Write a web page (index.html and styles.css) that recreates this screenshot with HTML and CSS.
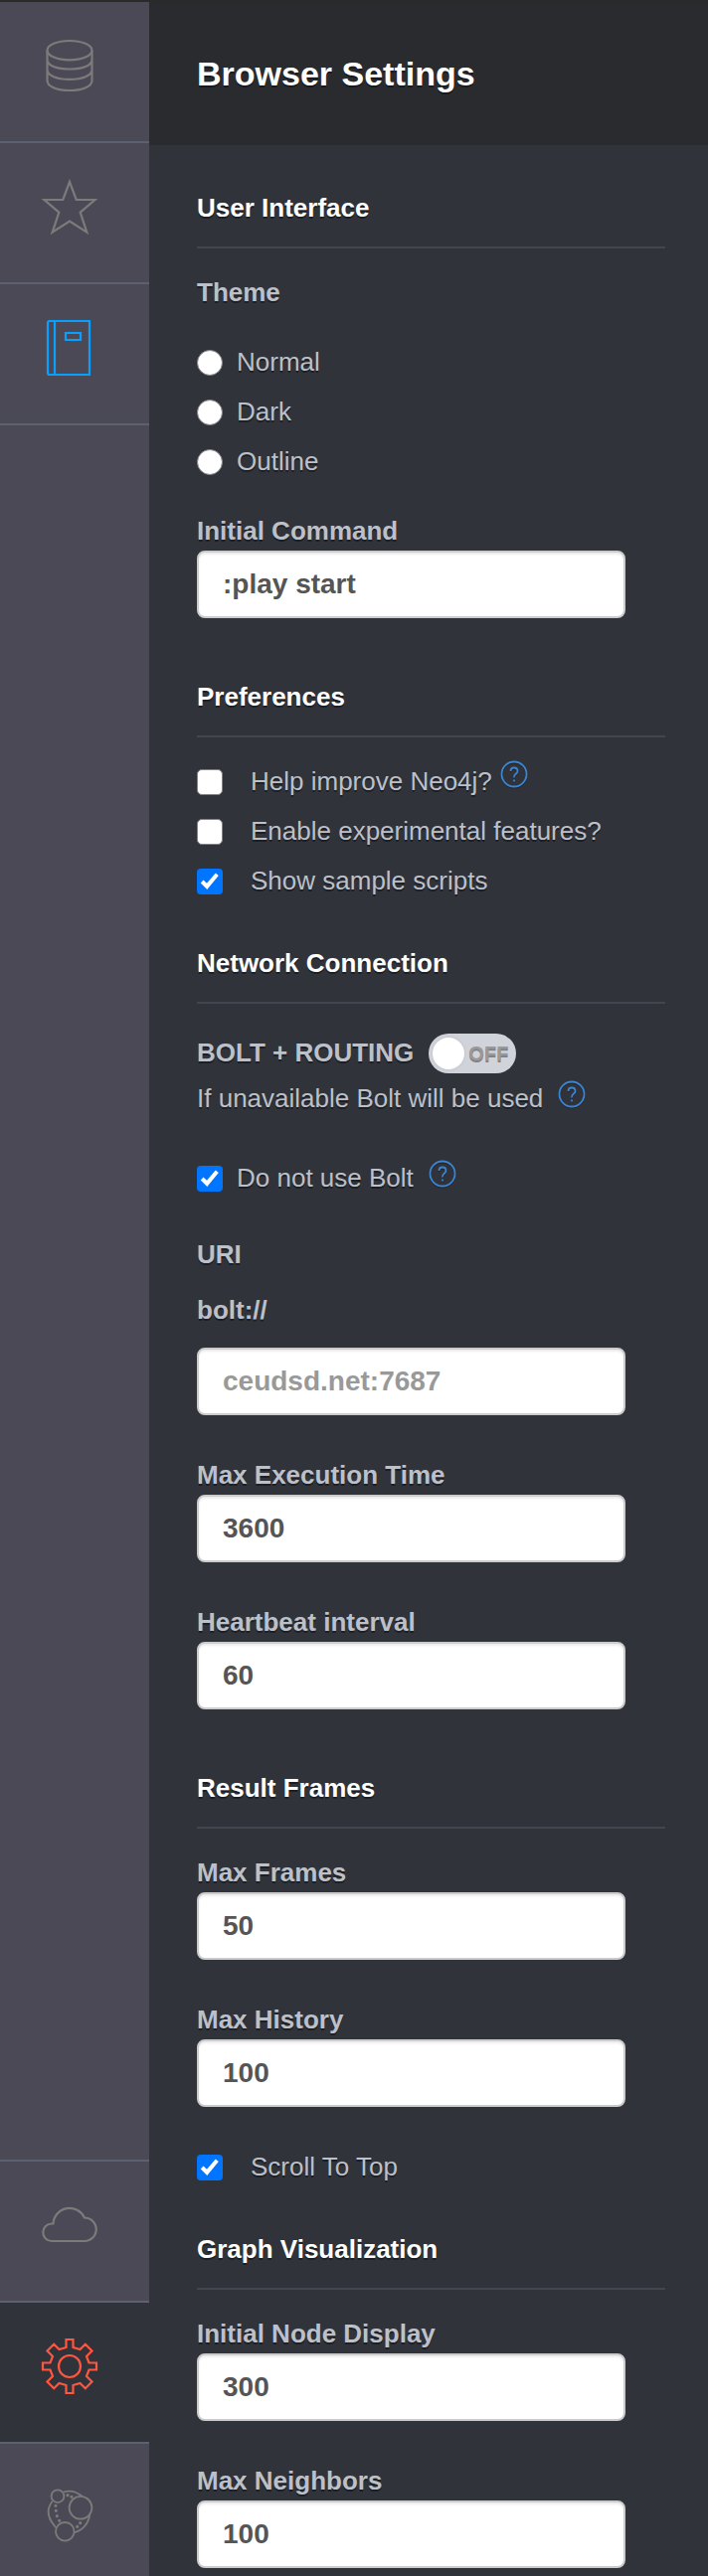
FILE: index.html
```html
<!DOCTYPE html>
<html lang="en">
<head>
<meta charset="utf-8">
<title>Browser Settings</title>
<link rel="stylesheet" href="styles.css">
</head>
<body>
<div class="app">
  <nav class="sidebar">
    <a class="nav-item"><svg class="icon" viewBox="0 0 60 60"><ellipse cx="30" cy="16.700" rx="22.500" ry="9.700"/><path d="M7.500 16.700V47C7.500 53 17 57 30 57S52.500 53 52.500 47V16.700M7.500 26C7.500 32 17 35.500 30 35.500S52.500 32 52.500 26M7.500 36C7.500 42 17 45.800 30 45.800S52.500 42 52.500 36"/></svg></a>
    <a class="nav-item"><svg class="icon" viewBox="0 0 60 60"><path d="M30 7L36.700 25H55.500L40.700 37.700L47.300 57.700L30 46.500L12.700 57.700L19.300 37.700L4.500 25H23.300Z"/></svg></a>
    <a class="nav-item blue"><svg class="icon" viewBox="0 0 60 60"><path d="M10 5H50V59H10Q8 59 8 57V7Q8 5 10 5ZM15 5V59M26 17H41V24H26Z"/></svg></a>
    <div class="spacer"></div>
    <a class="nav-item up"><svg class="icon" viewBox="0 0 60 60"><path d="M12 48H45A11.750 11.750 0 0 0 45 24.500A16.500 16.500 0 0 0 13.500 30.500H12A8.750 8.750 0 0 0 12 48Z"/></svg></a>
    <a class="nav-item up active"><svg class="icon" viewBox="0 0 60 60"><path d="M26.500 5H33.500V13L40.500 15L45.800 9.800L52.500 16.500L47 22L49.500 28.500H57V35.500H49.500L47 42L52.500 47.500L45.800 54.200L40.500 49L33.500 51V59H26.500V51L19.500 49L14.200 54.200L7.500 47.500L13 42L10.500 35.500H3V28.500H10.500L13 22L7.500 16.500L14.200 9.800L19.500 15L26.500 13Z"/><circle cx="30" cy="32" r="11"/></svg></a>
    <a class="nav-item up"><svg class="icon graph" viewBox="0 0 60 60"><circle cx="18" cy="20.700" r="6.400"/><circle cx="41" cy="32.300" r="11.400"/><circle cx="25.300" cy="56.300" r="9.300"/><path d="M24 16.500Q34 13.500 43 21M12.700 25.700Q3 38 16.500 52.500M50.300 39Q48 53.500 34.300 57.500"/><path class="dots" d="M28 19.700h0M32 21.300h0M16 30.300h0M16.300 35.300h0M17.300 40.700h0M19.700 45.300h0M40.700 47.700h0M37.700 51.300h0"/></svg></a>
  </nav>
  <main class="drawer">
    <header class="drawer-header"><h1>Browser Settings</h1></header>
    <div class="content">
      <h2>User Interface</h2>
      <div class="label theme">Theme</div>
      <label class="row"><input type="radio" name="theme"><span>Normal</span></label>
      <label class="row"><input type="radio" name="theme"><span>Dark</span></label>
      <label class="row"><input type="radio" name="theme"><span>Outline</span></label>
      <label class="field first"><span class="label">Initial Command</span><input class="text" value=":play start"></label>

      <h2 class="after-field">Preferences</h2>
      <label class="row wide"><input type="checkbox"><span>Help improve Neo4j?</span><svg class="help near" viewBox="0 0 28 28"><circle cx="14" cy="14" r="12.500"/><path d="M10.500 11Q10.500 7.500 14 7.500T17.500 11Q17.500 12.500 15.500 14T14 17.500M14 19.500V21.500"/></svg></label>
      <label class="row wide"><input type="checkbox"><span>Enable experimental features?</span></label>
      <label class="row wide"><input type="checkbox" checked><span>Show sample scripts</span></label>

      <h2 class="after-row">Network Connection</h2>
      <div class="switch-row"><span class="label">BOLT + ROUTING</span><span class="switch"><span class="knob"></span><span class="off">OFF</span></span></div>
      <div class="row note"><span>If unavailable Bolt will be used</span><svg class="help" viewBox="0 0 28 28"><circle cx="14" cy="14" r="12.500"/><path d="M10.500 11Q10.500 7.500 14 7.500T17.500 11Q17.500 12.500 15.500 14T14 17.500M14 19.500V21.500"/></svg></div>
      <label class="row bolt"><input type="checkbox" checked><span>Do not use Bolt</span><svg class="help" viewBox="0 0 28 28"><circle cx="14" cy="14" r="12.500"/><path d="M10.500 11Q10.500 7.500 14 7.500T17.500 11Q17.500 12.500 15.500 14T14 17.500M14 19.500V21.500"/></svg></label>
      <div class="label uri">URI</div>
      <label class="field scheme"><span class="label">bolt://</span><input class="text" placeholder="ceudsd.net:7687"></label>
      <label class="field"><span class="label">Max Execution Time</span><input class="text" value="3600"></label>
      <label class="field"><span class="label">Heartbeat interval</span><input class="text" value="60"></label>

      <h2 class="after-field">Result Frames</h2>
      <label class="field top"><span class="label">Max Frames</span><input class="text" value="50"></label>
      <label class="field"><span class="label">Max History</span><input class="text" value="100"></label>
      <label class="row wide scroll"><input type="checkbox" checked><span>Scroll To Top</span></label>

      <h2 class="after-row">Graph Visualization</h2>
      <label class="field top"><span class="label">Initial Node Display</span><input class="text" value="300"></label>
      <label class="field"><span class="label">Max Neighbors</span><input class="text" value="100"></label>
    </div>
  </main>
</div>
</body>
</html>
```
FILE: styles.css
```css
* { box-sizing: border-box; }
body { margin: 0; font: 26px/40px "Liberation Sans", Arial, sans-serif; color: #bcc0c9; background: #30333a; }
.app { display: flex; height: 2592px; overflow: hidden; border-top: 2px solid #2a2a2b; }
.sidebar { width: 150px; flex: none; display: flex; flex-direction: column; background: #4c4956; height: 2597px; }
.nav-item { height: 142px; flex: none; border-bottom: 2px solid #5d6070; padding: 32px 0 0 40px; color: #7c7b7a; }
.nav-item.up { border-bottom: 0; border-top: 2px solid #5d6070; }
.nav-item.blue { color: #08a0ff; }
.nav-item.active { background: #30333a; color: #ff5640; }
.icon { display: block; width: 60px; height: 60px; fill: none; stroke: currentColor; stroke-width: 2.2; overflow: visible; }
.graph { stroke-width: 1.8; }
.dots { stroke-width: 3.2; stroke-linecap: round; }
.spacer { flex: 1; }
.drawer { flex: 1; }
.drawer-header { height: 144px; background: #2a2b2f; padding: 52px 48px 0; }
h1, h2 { margin: 0; color: #fff; font-weight: bold; text-shadow: 0 2px 0 rgba(0,0,0,.4); }
h1 { font-size: 34px; line-height: 40px; }
.content { padding: 43px 43px 0 48px; text-shadow: 0 2px 0 rgba(0,0,0,.4); }
h2 { font-size: 26px; line-height: 40px; padding-bottom: 19px; border-bottom: 2px solid #434651; margin-bottom: 24px; }
.label { display: block; font-weight: bold; }
.theme { margin-bottom: 30px; }
.row { display: flex; height: 40px; margin-bottom: 10px; white-space: nowrap; }
.row input { appearance: none; width: 26px; height: 26px; margin: 8px 13px 0 0; flex: none; background: #fff; border: 1px solid #82848a; border-radius: 5px; }
.row input[type="radio"] { border-radius: 50%; }
.row input:checked { background: #0075ff; border: 0; border-radius: 4px; }
.row input:checked::before { content: ""; display: block; width: 26px; height: 26px; background: #fff; clip-path: polygon(3.8px 14.5px, 6.5px 11.5px, 10px 14.8px, 18.800px 4.500px, 21.800px 7px, 10.300px 21px); }
.row input { margin-right: 14px; }
.row.wide input { margin-right: 28px; }
.field { display: block; margin-top: 40px; }
.field.first { margin-top: 30px; }
.field.top { margin-top: 0; }
.text { display: block; width: 431px; height: 68px; border: 2px solid #ccc; border-radius: 8px; padding: 0 24px; background: #fff; color: #555; font: bold 28px "Liberation Sans", Arial, sans-serif; box-shadow: inset 0 2px 2px rgba(0,0,0,.075); }
.text::placeholder { color: #999; opacity: 1; }
h2.after-field { margin-top: 59px; }
h2.after-row { margin-top: 43px; }
.help { width: 28px; height: 28px; fill: none; stroke: #3c85d3; stroke-width: 1.8; margin: 2px 0 0 15px; filter: drop-shadow(0 1px 0 rgba(0,0,0,.3)); }
.help.near { margin: -1px 0 0 8px; }
.switch-row { display: flex; margin-top: 29px; height: 40px; }
.switch { margin: 1px 0 0 15px; width: 88px; height: 40px; border-radius: 20px; background: #d0d3d9; padding: 4px; display: flex; }
.knob { width: 32px; height: 32px; border-radius: 50%; background: #fff; box-shadow: 0 0 3px #bbc; }
.off { font: bold 20px/32px "Liberation Sans", Arial, sans-serif; color: #999; margin-left: 4px; }
.note { margin: 6px 0 40px; }
.bolt { margin-bottom: 37px; }
.uri { margin-bottom: 16px; }
.scheme { margin-top: 0; }
.scheme .label { margin-bottom: 18px; }
.scroll { margin: 40px 0 0; }
```
